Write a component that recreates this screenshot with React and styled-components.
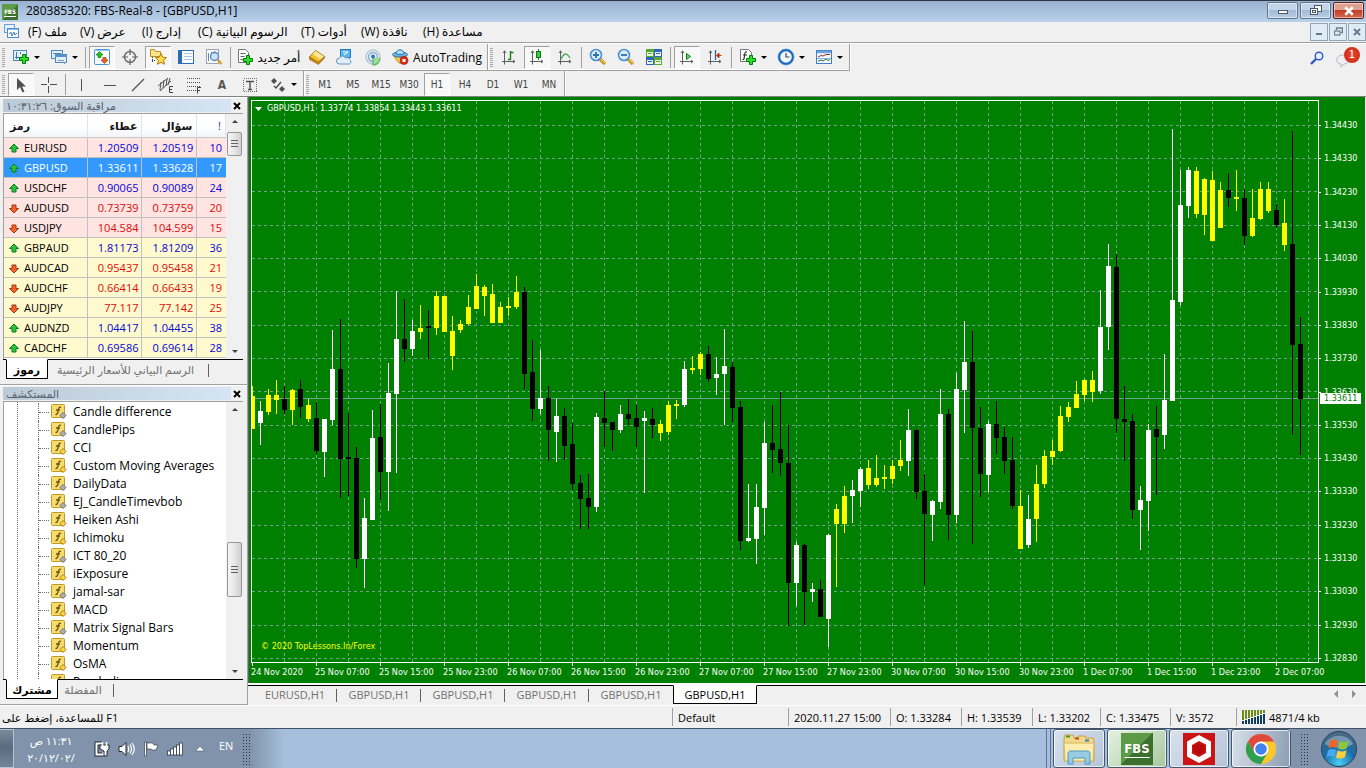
import React, { useState } from 'react'
import styled, { createGlobalStyle, css } from 'styled-components'

const Face = "#f0f0f0";
const Shadow = "#a0a0a0";
const ChartGreen = "#008000";
const GridColor = "#74a08e";
const UiFont = "'Open Sans', 'DejaVu Sans', sans-serif";
const SmallFont = "'DejaVu Sans Condensed', 'DejaVu Sans', sans-serif";

const GlobalStyle = createGlobalStyle`
  * {
    box-sizing: border-box;
  }
  body {
    margin: 0;
    background: ${Face};
    font-family: ${UiFont};
    font-size: 12px;
    color: #000;
  }
  button {
    font-family: inherit;
    color: inherit;
    padding: 0;
    border: 0;
    background: none;
  }
  svg {
    display: block;
    flex: none;
  }
`

const Window = styled.div`
  display: flex;
  flex-direction: column;
  min-height: 100vh;
`

/* ---------- title bar and menu ---------- */
const TitleBar = styled.header`
  display: flex;
  align-items: center;
  height: 22px;
  padding: 0 2px;
  border-top: 1px solid #30343f;
  background: linear-gradient(#97b1d0, #b9d1ea);
`
const AppName = styled.h1`
  flex: 1;
  margin: 0 0 2px 8px;
  font-size: 12px;
  line-height: 18px;
  font-weight: 400;
`
const FbsMark = styled.span`
  display: flex;
  align-items: center;
  justify-content: center;
  width: ${p => p.$big ? "32px" : "16px"};
  height: ${p => p.$big ? "32px" : "16px"};
  background: linear-gradient(135deg, #5c9a46 50%, #3c7030 50%);
  color: #fff;
  font-family: ${SmallFont};
  font-weight: 700;
  font-size: ${p => p.$big ? "13px" : "6px"};
  line-height: 1;
  text-decoration: underline;
  text-underline-offset: ${p => p.$big ? "4px" : "2px"};
`
const Caption = styled.div`
  display: flex;
  gap: 2px;
  margin-bottom: 2px;
`
const CaptionButton = styled.button`
  display: flex;
  align-items: center;
  justify-content: center;
  width: 31px;
  height: 17px;
  border: 1px solid ${p => p.$close ? "#5a2020" : "#5f7690"};
  border-radius: 2px;
  box-shadow: inset 0 0 0 1px rgba(255, 255, 255, 0.5);
  background: ${p => p.$close
    ? "linear-gradient(#e0a090 45%, #c04028 50%, #d06a50)"
    : "linear-gradient(#c3d5e8 45%, #a2bad4 50%, #b8cee6)"};
`
const MenuBar = styled.nav`
  display: flex;
  align-items: center;
  height: 22px;
  padding: 0 0 2px 4px;
  border-bottom: 1px solid #fff;
  box-shadow: inset 0 -1px 0 ${Shadow};
`
const MenuItem = styled.button`
  width: ${p => p.$w}px;
  margin-right: 18px;
  font-size: 12px;
  line-height: 18px;
  white-space: nowrap;
  text-align: left;
`
const MenuItems = styled.div`
  display: flex;
  flex: 1;
  margin-left: 9px;
`
const MdiButton = styled.button`
  display: flex;
  align-items: center;
  justify-content: center;
  width: 18px;
  height: 18px;
  margin-left: 1px;
  border: 1px solid #92a4b8;
  background: #dfebf7;
`

/* ---------- toolbars ---------- */
const ToolRow = styled.div`
  display: flex;
  height: ${p => p.$last ? "25px" : "27px"};
`
const Group = styled.div`
  display: flex;
  align-items: center;
  gap: 2px;
  height: ${p => p.$flat ? "25px" : "27px"};
  padding-top: ${p => p.$flat ? "2px" : "0"};
  padding-right: 2px;
  border-right: 1px solid ${Shadow};
  border-bottom: ${p => p.$flat ? "0" : "1px solid " + Shadow};
  box-shadow: 1px 0 0 #fff, inset 0 -1px 0 ${p => p.$flat ? "transparent" : "#fff"};
`
const Grip = styled.span`
  width: 3px;
  height: 19px;
  margin: 0 1px 0 2px;
  background: repeating-linear-gradient(#a8a8a8 0 1px, transparent 1px 2px);
`
const Sep = styled.span`
  width: 1px;
  height: 21px;
  margin: 0 1px;
  background: ${Shadow};
`
const Tool = styled.button`
  display: flex;
  align-items: center;
  justify-content: center;
  gap: 4px;
  width: ${p => p.$w || 26}px;
  height: 23px;
  white-space: nowrap;
  font-size: 12px;
  ${p => p.$on && css`
    border: 1px solid ${Shadow};
    border-right-color: #fff;
    border-bottom-color: #fff;
    background: #f8f8f8;
  `}
`
const Frame = styled(Tool)`
  font-family: ${SmallFont};
  font-size: 10px;
  color: #444;
`
const Letter = styled(Tool)`
  font-family: ${SmallFont};
  font-size: 12px;
  font-weight: 700;
  color: #555;
`
const Caret = styled.span`
  border: 3px solid transparent;
  border-top-color: #000;
  border-bottom: 0;
`
const RowEnd = styled.div`
  display: flex;
  flex: 1;
  align-items: center;
  justify-content: flex-end;
  gap: 12px;
  padding-right: 6px;
`
const Chat = styled.button`
  position: relative;
  width: 24px;
  height: 22px;
`
const Badge = styled.span`
  position: absolute;
  top: 0;
  right: 0;
  width: 16px;
  height: 16px;
  border-radius: 50%;
  background: radial-gradient(#e84a30, #c82010);
  color: #fff;
  font-family: ${SmallFont};
  font-size: 11px;
  line-height: 16px;
`

/* ---------- body ---------- */
const Body = styled.main`
  display: grid;
  grid-template-columns: 248px minmax(0, 1fr);
  flex: 1;
  border-top: 1px solid #808080;
`
const Side = styled.aside`
  display: flex;
  flex-direction: column;
  border-right: 1px solid ${Shadow};
`
const Panel = styled.section`
  display: flex;
  flex-direction: column;
  flex: ${p => p.$grow ? "1" : "none"};
  padding: 2px 4px 3px 3px;
  border-bottom: 1px solid ${Shadow};
  box-shadow: inset 0 1px 0 #fff;
`
const PanelHead = styled.div`
  display: flex;
  align-items: center;
  height: 13px;
  margin-bottom: 1px;
`
const PanelTitle = styled.h2`
  flex: 1;
  margin: 0;
  padding-left: 3px;
  background: linear-gradient(90deg, #bccad8, #d6e5f3);
  color: #56606c;
  font-size: 11px;
  line-height: 13px;
  font-weight: 400;
`
const Close = styled.button`
  width: 12px;
  display: flex;
  justify-content: center;
`
const Box = styled.div`
  display: flex;
  flex: 1 0 0px;
  min-height: ${p => p.$h}px;
  border: 1px solid ${Shadow};
  border-right: 0;
  border-bottom: 0;
  background: #fff;
  overflow: hidden;
`
const Quotes = styled.table`
  flex: 1;
  align-self: flex-start;
  table-layout: fixed;
  border-collapse: separate;
  border-spacing: 0;
`
const Head = styled.th`
  width: ${p => p.$w};
  height: 24px;
  padding: 0 4px 0 6px;
  border-right: 1px solid #dfe4ea;
  border-bottom: 1px solid #c8c8c8;
  background: linear-gradient(#fff 50%, #f3f5f8);
  font-size: 11px;
  font-weight: ${p => p.$plain ? "400" : "700"};
  color: ${p => p.$plain ? "#40308c" : "#111"};
  text-align: ${p => p.$left ? "left" : "right"};
`
const Row = styled.tr`
  background: ${p => p.$on ? "#3399ff" : p.$pink ? "#ffe4e1" : "#fffacd"};
  color: ${p => p.$on ? "#fff" : p.$down ? "#e00808" : "#0404d8"};
`
const Cell = styled.td`
  height: 20px;
  padding: 0 3px 0 0;
  border-right: 1px solid #c0c0c0;
  border-bottom: 1px solid #c0c0c0;
  font-size: 11px;
  line-height: 19px;
  text-align: right;
  &:last-child {
    padding-right: 4px;
    border-right: 0;
  }
`
const Pair = styled.div`
  display: flex;
  align-items: center;
  gap: 4px;
  padding-left: 4px;
  color: ${p => p.$on ? "#fff" : "#000"};
`
const Scroll = styled.div`
  display: flex;
  flex-direction: column;
  align-items: center;
  justify-content: space-between;
  position: relative;
  width: 17px;
  padding: 6px 0;
  background: #f0f0f0;
`
const Thumb = styled.div`
  position: absolute;
  top: ${p => p.$top};
  width: 15px;
  height: ${p => p.$h}px;
  border: 1px solid #979797;
  border-radius: 2px;
  background:
    repeating-linear-gradient(#606060 0 1px, transparent 1px 3px) center / 7px 8px no-repeat,
    linear-gradient(90deg, #f5f5f5, #e6e6e6 50%, #cfcfcf);
`
const ScrollArrow = styled.button`
  border: 3px solid transparent;
  border-top-width: ${p => p.$up ? "0" : "3px"};
  border-bottom-width: ${p => p.$up ? "3px" : "0"};
  border-${p => p.$up ? "bottom" : "top"}-color: #404040;
`
const Tabs = styled.div`
  display: flex;
  height: 22px;
  padding-left: 3px;
  border-top: 1px solid #000;
`
const PanelTab = styled.button`
  height: 20px;
  min-width: ${p => p.$w}px;
  margin-top: -1px;
  font-size: 11px;
  white-space: nowrap;
  ${p => p.$on ? css`
    border: 1px solid #000;
    border-top-color: #fff;
    background: #fff;
    font-weight: 700;
  ` : css`
    color: #707070;
  `}
`
const TabRule = styled.span`
  width: 1px;
  height: 13px;
  margin: 4px 0 0 5px;
  background: #606060;
`
const Tree = styled.ul`
  flex: 1;
  height: 0;
  margin: 0 0 0 13px;
  padding: 1px 0 0;
  list-style: none;
`
const TreeRail = styled.div`
  display: flex;
  flex: 1;
  height: 0;
  min-height: 100%;
  background: repeating-linear-gradient(#707070 0 1px, transparent 1px 2px) 13px 0 / 1px 100% no-repeat;
`
const Leaf = styled.li`
  display: flex;
  align-items: center;
  height: 18px;
  margin-left: 21px;
  border-left: 1px dotted #707070;
  font-size: 12px;
  line-height: 18px;
  white-space: nowrap;
  &::before {
    content: "";
    width: 10px;
    margin-right: 2px;
    border-top: 1px dotted #707070;
  }
  svg {
    margin-right: 6px;
  }
`

/* ---------- chart ---------- */
const ChartColumn = styled.div`
  display: flex;
  flex-direction: column;
  min-width: 0;
`
const Chart = styled.section`
  display: grid;
  grid-template-columns: minmax(0, 1fr) 46px;
  grid-template-rows: minmax(500px, 1fr) 20px;
  flex: 1;
  padding: 3px 0 0 2px;
  border-left: 1px solid #606060;
  border-right: 1px solid #fff;
  background: ${ChartGreen};
  font-family: ${SmallFont};
  font-size: 9px;
  line-height: 11px;
  color: #fff;
`
const Plot = styled.div`
  position: relative;
  display: flex;
  border: 1px solid #fff;
`
const Symbol = styled.div`
  position: absolute;
  top: 2px;
  left: 3px;
  display: flex;
  align-items: center;
  gap: 5px;
  color: #fff;
`
const Watermark = styled.div`
  position: absolute;
  left: 9px;
  bottom: 10px;
  color: #ffff00;
`
const PriceAxis = styled.div`
  position: relative;
  display: flex;
  flex-direction: column;
  justify-content: space-between;
  padding-top: 21px;
`
const Price = styled.span`
  display: flex;
  align-items: center;
  height: 9px;
  &::before {
    content: "";
    width: 2px;
    height: 1px;
    margin-right: 3px;
    background: #fff;
  }
`
const Bid = styled.span`
  position: absolute;
  top: 293px;
  left: 1px;
  right: 4px;
  padding-left: 4px;
  background: #fff;
  color: ${ChartGreen};
`
const TimeAxis = styled.div`
  display: flex;
  grid-column: 1 / -1;
`
const Time = styled.span`
  flex: 0 0 64px;
  padding-top: 4px;
  white-space: nowrap;
  background: linear-gradient(#fff, #fff) 1px 0 / 1px 3px no-repeat;
`
const ChartTabs = styled.div`
  display: flex;
  height: 20px;
  margin-top: 2px;
  padding-left: 5px;
  border-top: 1px solid #000;
  box-shadow: 0 -2px 0 #fff;
`
const ChartTab = styled.button`
  width: 84px;
  height: 19px;
  margin-top: -1px;
  font-size: 11px;
  color: #707070;
  ${p => p.$on ? css`
    border: 1px solid #000;
    border-top-color: #fff;
    background: #fff;
    color: #000;
  ` : css`
    background: linear-gradient(#606060, #606060) right 4px / 1px 13px no-repeat;
  `}
  ${p => p.$beforeOn && css`background: none;`}
`
const TabArrows = styled.div`
  display: flex;
  flex: 1;
  align-items: center;
  justify-content: flex-end;
  gap: 14px;
  padding: 0 10px 4px 0;
`
const SideArrow = styled.button`
  border: 4px solid transparent;
  border-${p => p.$dir}-color: #909090;
  border-${p => p.$dir === "left" ? "right" : "left"}-width: 0;
  border-${p => p.$dir}-width: 4px;
`

/* ---------- status bar ---------- */
const Status = styled.footer`
  display: flex;
  align-items: center;
  height: 23px;
  border-top: 1px solid #fff;
`
const StatusCell = styled.div`
  display: flex;
  align-items: center;
  gap: 3px;
  flex: ${p => p.$w ? "none" : "1"};
  width: ${p => p.$w ? p.$w + "px" : "auto"};
  height: 18px;
  padding-left: ${p => p.$w ? "5px" : "2px"};
  border-left: ${p => p.$w ? "1px solid " + Shadow : "0"};
  font-size: 11px;
  white-space: nowrap;
`

/* ---------- task bar ---------- */
const TaskBar = styled.div`
  display: flex;
  align-items: stretch;
  height: 40px;
  border-top: 1px solid #3d5068;
  background: linear-gradient(90deg, #8093aa 0, #8093aa 250px, #a6bfdc 285px);
`
const ShowDesktop = styled.button`
  width: 14px;
  border: 1px solid #b4c2d2;
  border-left: 0;
  background: linear-gradient(#7c8a9c, #5c6a7e 45%, #74849a);
`
const Clock = styled.time`
  width: 74px;
  padding-top: 3px;
  color: #fff;
  font-size: 11px;
  line-height: 17px;
  text-align: center;
`
const Tray = styled.div`
  display: flex;
  align-items: center;
  gap: 8px;
  padding-left: 6px;
`
const Lang = styled.span`
  margin: 0 9px 6px 3px;
  color: #fff;
  font-size: 11px;
`
const TaskGrip = styled.span`
  align-self: center;
  width: 9px;
  height: 32px;
  background: radial-gradient(circle, #26303c 0 1px, transparent 1px) 0 0 / 3px 3px;
`
const TaskButtons = styled.div`
  display: flex;
  flex: 1;
  justify-content: flex-end;
  gap: 2px;
`
const TaskButton = styled.button`
  display: flex;
  align-items: center;
  justify-content: center;
  width: ${p => p.$w || 60}px;
  border: 1px solid #45566c;
  border-radius: 3px;
  box-shadow: inset 0 0 0 1px rgba(255, 255, 255, 0.7);
  background: ${p => p.$on
    ? "linear-gradient(135deg, #e4f2e0, #a8c8a0)"
    : p.$dim ? "linear-gradient(100deg, #d8e0ea, #8c9cb2)" : "linear-gradient(135deg, #d8e2ee, #b4c4d8)"};
`
const Stack = styled.span`
  width: 5px;
  border: 1px solid #5e7490;
  border-width: 0 1px;
`
const TaskEnd = styled.div`
  display: flex;
  align-items: center;
  gap: 11px;
  padding: 0 8px 0 9px;
  background: #8093aa;
`

/* ---------- icons ---------- */
const Icon = ({ size = 18, children }) => (
  <svg width={size} height={size} viewBox="0 0 18 18" fill="none" aria-hidden="true">{children}</svg>
)
const Plus = ({ x, y }) => (
  <path d={`M${x} ${y}h3v3h3v3h-3v3h-3v-3h-3v-3h3z`} fill="#2ee02e" stroke="#067a06" />
)
const NewChart = () => (
  <Icon>
    <rect x="1.500" y="2.500" width="13" height="10" fill="#e6f0fb" stroke="#5088bc" />
    <path d="M4.500 4v7M3 9.500h9M8.500 4v2" stroke="#3b78ae" />
    <Plus x={10.500} y={6.500} />
  </Icon>
)
const Profiles = () => (
  <Icon>
    <rect x="1.500" y="2.500" width="11" height="8" fill="#e2eefb" stroke="#5088bc" />
    <path d="M3 5.500h8" stroke="#5088bc" />
    <rect x="5.500" y="6.500" width="11" height="8" fill="#e2eefb" stroke="#5088bc" />
    <path d="M5 8h12" stroke="#5a94cc" strokeWidth="2" />
    <path d="M8 12.500h6M14.500 16v-2" stroke="#7d9cc0" />
  </Icon>
)
const MarketWatch = () => (
  <Icon>
    <rect x="1.500" y="1.500" width="15" height="15" rx="1" fill="#fbfdff" stroke="#4a94d8" />
    <path d="M2 2.500h14" stroke="#9ccaf0" />
    <path d="M6.500 3.500l3.500 3.500H8v2.500H5V7H3z" fill="#24c024" stroke="#0b7a0b" strokeWidth=".7" />
    <path d="M11.500 15.500L15 12h-2V9.500h-3V12H8z" fill="#f0602c" stroke="#a03010" strokeWidth=".7" />
  </Icon>
)
const Target = () => (
  <Icon>
    <circle cx="9" cy="9" r="5.500" stroke="#707070" strokeWidth="1.500" />
    <path d="M9 1v6M9 11v6M1 9h6M11 9h6" stroke="#606060" strokeWidth="1.200" />
  </Icon>
)
const Navigator = () => (
  <Icon>
    <path d="M1.500 1.500h4l1 2h5v5h-10z" fill="#fbe48a" stroke="#b89024" />
    <path d="M3.500 9v6M3 12.500h4" stroke="#444" strokeDasharray="1 1" />
    <path d="M12 5.500l1.700 3.700 3.800.4-2.900 2.700.9 4-3.500-2-3.500 2 .9-4L6.500 9.600l3.800-.4z" fill="#ffdc48" stroke="#b07c10" />
  </Icon>
)
const DataWindow = () => (
  <Icon>
    <rect x="1.500" y="2.500" width="15" height="13" fill="#fff" stroke="#2a6cb8" />
    <path d="M3.500 3v12" stroke="#2a6cb8" strokeWidth="3" />
    <path d="M7 5.500h8M7 8.500h8M7 11.500h8" stroke="#a8c4ec" />
  </Icon>
)
const Tester = () => (
  <Icon>
    <rect x="1.500" y="1.500" width="12" height="14" fill="#f6f8fa" stroke="#9aa4b0" />
    <path d="M3.500 13V5M6.500 9V4M10 6V3" stroke="#7088a0" />
    <circle cx="9.500" cy="8.500" r="4" fill="#c4e0f8" fillOpacity=".85" stroke="#5a8cc0" strokeWidth="1.400" />
    <path d="M12.500 11.500l4 4.500" stroke="#d8a030" strokeWidth="2.400" />
  </Icon>
)
const NewOrder = () => (
  <Icon>
    <path d="M2.500 1.500h7l3 3v10h-10z" fill="#fff" stroke="#777" />
    <path d="M4.500 5.500h5M4.500 8.500h4M4.500 11.500h3" stroke="#666" />
    <Plus x={10.500} y={7.500} />
  </Icon>
)
const Gold = () => (
  <Icon>
    <path d="M1.500 9l6-6.500 9 6-6 6.500z" fill="#f4c430" stroke="#a87810" />
    <path d="M7.500 3l8.500 5.500-3 3L4.500 6z" fill="#ffe89a" />
    <path d="M1.500 9v2.500l9 5 6-6.500V8.500L10.500 14z" fill="#c88c18" stroke="#906008" strokeWidth=".6" />
  </Icon>
)
const Community = () => (
  <Icon>
    <rect x="4.500" y="1.500" width="10" height="8" fill="#58b8f0" stroke="#2878b8" />
    <path d="M7 4h5M8 7l4-3" stroke="#fff" />
    <path d="M3.500 16a3 3 0 010-6c1-2.500 5-2.500 6 0 2-1 4 0 4 1.500a2.500 2.500 0 010 4.500z" fill="#dfeefa" stroke="#6b94bc" />
  </Icon>
)
const Signal = () => (
  <Icon>
    <circle cx="9" cy="9" r="7" stroke="#b8c8d4" strokeWidth="1.500" />
    <circle cx="9" cy="9" r="4.500" stroke="#88aed0" strokeWidth="1.500" />
    <path d="M9 9v8c4 0 7-3 7-7" fill="#a0dca0" stroke="#58b858" strokeWidth="1.200" />
    <circle cx="9" cy="8.500" r="2" fill="#2878c8" />
  </Icon>
)
const AutoIcon = () => (
  <Icon>
    <path d="M2 7c4 3 9 3 14 0l-4 8H8z" fill="#f8d850" stroke="#b88c18" />
    <ellipse cx="9" cy="6.500" rx="7.500" ry="2.500" fill="#6cb4e4" stroke="#3878b0" />
    <path d="M5 5.500c0-5 8-5 8 0-2 1.500-6 1.500-8 0z" fill="#a8d8f4" stroke="#3878b0" />
    <circle cx="13" cy="12.500" r="4" fill="#e02818" stroke="#a01008" strokeWidth=".6" />
    <rect x="11.500" y="11" width="3" height="3" fill="#fff" />
  </Icon>
)
const Axes = () => <path d="M4.500 2.500v14M2 13.500h13M3 5l1.500-2L6 5M13 12l2 1.500-2 1.500" stroke="#606060" />
const BarChart = () => <Icon><Axes /><path d="M10.500 3v9M8 11.500h3M10.500 4.500h3" stroke="#188018" strokeWidth="1.400" /></Icon>
const CandleChart = () => <Icon><Axes /><path d="M10.500 1v11" stroke="#188018" /><rect x="8.500" y="3.500" width="4" height="6" fill="#30d048" stroke="#107818" /></Icon>
const LineChart = () => <Icon><Axes /><path d="M5 11c3-6 5-7 9-1" stroke="#40a850" strokeWidth="1.300" /></Icon>
const ScrollChart = () => <Icon><Axes /><path d="M8.500 5.500l4 3-4 3z" fill="#58d868" stroke="#108018" /></Icon>
const ShiftChart = () => <Icon><Axes /><path d="M9.500 2v10" stroke="#2868a8" strokeWidth="1.300" /><path d="M15.500 7.500h-4M13 5l-2.500 2.500L13 10z" fill="#d04820" stroke="#b83810" /></Icon>
const Zoom = ({ plus }) => (
  <Icon>
    <path d="M11 11l5 5" stroke="#c89828" strokeWidth="3.500" />
    <path d="M11.500 10.500l5 5" stroke="#ffe070" strokeWidth="1" />
    <circle cx="7" cy="7" r="5.500" fill="#d8ecfc" stroke="#4890cc" strokeWidth="1.600" />
    <path d={plus ? "M4 7h6M7 4v6" : "M4 7h6"} stroke="#2c70b0" strokeWidth="1.800" />
  </Icon>
)
const Tile = () => (
  <Icon>
    {[[1, 1, "#58a830"], [9, 1, "#2c64c0"], [1, 9, "#2c64c0"], [9, 9, "#58a830"]].map(([x, y, c]) => (
      <g key={x + "-" + y}>
        <rect x={x} y={y} width="8" height="8" fill={c} />
        <rect x={x + 1} y={y + 3} width="6" height="4" fill="#eaf4e8" />
        <path d={`M${x + 2} ${y + 4.500}h4`} stroke={c} />
      </g>
    ))}
  </Icon>
)
const Indicators = () => (
  <Icon>
    <path d="M1.500 1.500h8l3 3v9h-11z" fill="#fff" stroke="#777" />
    <path d="M8 4c-2-1-2 1-2.500 4S5 12 3.500 11.500M4 7h4" stroke="#333" strokeWidth="1.200" />
    <Plus x={10.500} y={7.500} />
  </Icon>
)
const ClockIcon = () => (
  <Icon>
    <circle cx="9" cy="9" r="7" fill="#eef6fc" stroke="#1c68b8" strokeWidth="2.400" />
    <circle cx="9" cy="9" r="8" stroke="#68acec" strokeWidth=".6" />
    <path d="M9 5v4h3.500" stroke="#404850" strokeWidth="1.200" />
  </Icon>
)
const Templates = () => (
  <Icon>
    <rect x="1.500" y="2.500" width="15" height="13" fill="#f6fafe" stroke="#4080c0" />
    <path d="M2 4h14" stroke="#68a4e0" strokeWidth="2.500" />
    <path d="M3 9l3-1.500 2 .5 3-1.500h4" stroke="#903020" />
    <path d="M3 13l3-1 2 1 3-2 2 1.500 2-1" stroke="#208040" />
    <path d="M2 10.500h14" stroke="#8cb0d8" />
  </Icon>
)
const Cursor = () => <Icon><path d="M5 2v12l3-3 2.500 5.500 2-1L10 10.500h4z" fill="#505050" /></Icon>
const Cross = () => <Icon><path d="M8.500 1v6M8.500 10v7M1 8.500h6M10 8.500h7" stroke="#505050" /></Icon>
const VLine = () => <Icon><path d="M8.500 3v12" stroke="#505050" /></Icon>
const HLine = () => <Icon><path d="M3 9.500h12" stroke="#505050" /></Icon>
const Trend = () => <Icon><path d="M3 15L15 3" stroke="#505050" strokeWidth="1.200" /></Icon>
const Channel = () => (
  <Icon>
    <path d="M1 10L11 2M3 15L14 5M4 6l-1 8M7 4l-1 8M10 3L9 10M13 2l-2 7" stroke="#505050" />
    <path d="M16 10.500h-3.500v6H16M12.500 13.500H15" stroke="#404040" />
  </Icon>
)
const Fibo = () => (
  <Icon>
    <path d="M2 2.500h14M2 6.500h14M2 10.500h14M2 14.500h9" stroke="#505050" strokeDasharray="1 1" />
    <path d="M16 11.500h-3.500v6M12.500 14.500H15" stroke="#404040" />
  </Icon>
)
const Objects = () => (
  <Icon>
    <path d="M5 2l3 3-3 3-3-3z" fill="#505050" />
    <path d="M5 10l2 2 5-6" stroke="#505050" strokeWidth="1.500" />
    <path d="M13 10l3 3-3 3-3-3z" fill="#505050" />
  </Icon>
)
const LabelT = () => (
  <Icon>
    <rect x="2.500" y="2.500" width="13" height="13" stroke="#707070" strokeDasharray="1 1" shapeRendering="crispEdges" />
    <path d="M5 5.500h8M9 5v8M7 13.500h4" stroke="#505050" strokeWidth="1.400" />
  </Icon>
)
const ChartsIcon = () => (
  <svg width="15" height="15" viewBox="0 0 15 15" fill="none" aria-hidden="true">
    <rect x=".5" y=".5" width="10" height="8" fill="#e6f1fc" stroke="#6aa0d8" />
    <rect x="3.500" y="4.500" width="11" height="9" fill="#fff" stroke="#4c8cd0" />
    <path d="M4 5.500h10" stroke="#8abcf0" />
    <path d="M5 10l2-2 1 4 2-4 1 3 2-2" stroke="#4080c8" />
  </svg>
)
const ArrowMark = ({ down }) => (
  <svg width="12" height="12" viewBox="0 0 12 12" aria-hidden="true">
    <path d={down ? "M6 11L1.500 6.500H4V3h4v3.500h2.500z" : "M6 2L1.500 6.500H4V10h4V6.500h2.500z"}
      fill={down ? "#f0632c" : "#2cc040"} stroke={down ? "#a83410" : "#0c7c1c"} />
  </svg>
)
const FuncIcon = ({ gray }) => (
  <svg width="16" height="16" viewBox="0 0 16 16" aria-hidden="true">
    <rect x=".5" y=".5" width="13" height="13" rx="1" fill="#f6dc6c" stroke="#c09a28" />
    <path d="M10 3.500c-2-.8-2.400.7-2.700 2.500S6.800 10.800 4.500 10.500M5 6h4" fill="none" stroke="#6c5410" strokeWidth="1.300" />
    <path d="M12 8.500l3 3-3 3-3-3z" fill={gray ? "#b0b0b0" : "#ffd848"} stroke={gray ? "#707070" : "#a87810"} />
  </svg>
)
const SmallX = ({ color = "#000", size = 8, w = 2 }) => (
  <svg width={size} height={size} viewBox="0 0 8 8"><path d="M1 1l6 6M7 1L1 7" stroke={color} strokeWidth={w} /></svg>
)
const MinMark = () => (
  <svg width="12" height="8" viewBox="0 0 12 8"><rect x="1.500" y="3.500" width="9" height="3" fill="#fff" stroke="#4a5a6c" /></svg>
)
const MdiMin = () => (
  <svg width="8" height="8" viewBox="0 0 8 8"><rect x="1" y="5" width="6" height="2" fill="#687c90" /></svg>
)
const RestoreMark = ({ color = "#fff" }) => (
  <svg width="12" height="11" viewBox="0 0 12 11" fill="none" stroke="#4a5a6c">
    <rect x="4.500" y=".5" width="7" height="6" fill={color} />
    <rect x=".5" y="3.500" width="7" height="6" fill={color} /><rect x="2.500" y="5.500" width="3" height="2" />
  </svg>
)
const MdiRestore = () => (
  <svg width="9" height="9" viewBox="0 0 9 9" fill="none" stroke="#687c90">
    <path d="M2.500 3V1h6v4.500H7" strokeWidth="1.400" /><rect x=".5" y="4" width="5.500" height="4" strokeWidth="1.200" />
  </svg>
)
const Bars = () => (
  <svg width="24" height="14" viewBox="0 0 24 14" aria-hidden="true">
    {[0, 1, 2, 3, 4, 5, 6, 7].map(i => (
      <g key={i}>
        <rect x={i * 3} y="0" width="2" height={10 - i} fill="#6c8a18" />
        <rect x={i * 3} y={11 - i} width="2" height={3 + i} fill="#103c60" />
      </g>
    ))}
  </svg>
)

/* ---------- data ---------- */
const menus = [
  ["ملف (F)", 34], ["عرض (V)", 44], ["إدارج (I)", 38], ["الرسوم البيانية (C)", 85],
  ["أدوات (T)", 42], ["نافذة (W)", 44], ["مساعدة (H)", 56],
]
const quotes = [
  ["EURUSD", "1.20509", "1.20519", 10, "up"],
  ["GBPUSD", "1.33611", "1.33628", 17, "up"],
  ["USDCHF", "0.90065", "0.90089", 24, "up"],
  ["AUDUSD", "0.73739", "0.73759", 20, "down"],
  ["USDJPY", "104.584", "104.599", 15, "down"],
  ["GBPAUD", "1.81173", "1.81209", 36, "up"],
  ["AUDCAD", "0.95437", "0.95458", 21, "down"],
  ["AUDCHF", "0.66414", "0.66433", 19, "down"],
  ["AUDJPY", "77.117", "77.142", 25, "down"],
  ["AUDNZD", "1.04417", "1.04455", 38, "up"],
  ["CADCHF", "0.69586", "0.69614", 28, "up"],
]
const indicators = [
  ["Candle difference", 1], ["CandlePips", 1], ["CCI", 0], ["Custom Moving Averages", 0],
  ["DailyData", 1], ["EJ_CandleTimevbob", 1], ["Heiken Ashi", 0], ["Ichimoku", 0],
  ["ICT 80_20", 1], ["iExposure", 0], ["jamal-sar", 1], ["MACD", 0],
  ["Matrix Signal Bars", 1], ["Momentum", 0], ["OsMA", 0], ["Parabolic", 0],
]
const frames = ["M1", "M5", "M15", "M30", "H1", "H4", "D1", "W1", "MN"]
const times = [
  "24 Nov 2020", "25 Nov 07:00", "25 Nov 15:00", "25 Nov 23:00", "26 Nov 07:00", "26 Nov 15:00",
  "26 Nov 23:00", "27 Nov 07:00", "27 Nov 15:00", "27 Nov 23:00", "30 Nov 07:00", "30 Nov 15:00",
  "30 Nov 23:00", "1 Dec 07:00", "1 Dec 15:00", "1 Dec 23:00", "2 Dec 07:00",
]
const prices = Array.from({ length: 17 }, (_, i) => (1.3443 - i * 0.001).toFixed(5))
const gridRows = [24, 57, 90, 124, 157, 190, 224, 257, 290, 324, 357, 390, 424, 457, 490, 524, 557]
const status = [
  ["Default", 116], ["2020.11.27 15:00", 102], ["O: 1.33284", 71], ["H: 1.33539", 71],
  ["L: 1.33202", 68], ["C: 1.33475", 70], ["V: 3572", 66],
]
const chartTabs = ["EURUSD,H1", "GBPUSD,H1", "GBPUSD,H1", "GBPUSD,H1", "GBPUSD,H1", "GBPUSD,H1"]

// colour, wick top, body top, body bottom, wick bottom
const candles = `
y 386 396 429 429|w 401 411 423 445|y 389 395 412 415|y 380 395 400 414|k 386 399 410 414|y 389 390 410 425
k 380 389 407 418|y 399 405 419 422|k 402 418 451 454|w 419 419 452 477|w 330 369 420 425|k 319 369 459 498
k 413 457 459 496|k 447 458 559 568|w 498 518 559 588|w 410 438 520 520|k 404 437 472 500|w 363 393 472 511
w 291 339 394 473|k 299 339 349 362|w 320 331 349 356|y 305 328 332 339|k 310 326 328 359|y 291 296 328 335
y 296 296 332 332|y 316 331 356 370|y 320 324 330 333|y 295 307 324 325|y 274 286 309 309|y 285 287 296 316
y 284 294 323 323|y 302 307 323 323|y 297 306 308 316|y 276 292 307 309|k 287 292 374 389|k 340 372 409 421
w 350 398 409 414|k 386 398 430 461|w 399 416 432 462|k 408 416 446 460|k 423 444 484 490|k 475 483 499 529
k 474 498 507 529|w 413 417 507 512|k 391 418 423 447|k 422 422 430 451|w 405 414 430 433|k 399 414 419 425
k 405 418 427 447|w 411 418 421 493|k 408 419 425 438|y 420 424 433 441|y 401 405 432 435|y 400 404 406 419
w 361 369 405 407|y 356 368 370 374|y 352 354 369 375|k 346 354 379 382|w 357 374 378 395|w 329 366 374 425
k 362 367 408 422|k 401 407 541 550|w 484 538 541 542|w 484 507 539 564|w 422 443 508 535|k 405 443 450 473
k 392 449 463 476|k 425 463 583 626|w 542 545 583 606|k 544 545 592 625|w 583 589 592 602|k 580 589 617 617
w 534 535 619 647|y 504 509 524 587|y 486 496 524 533|w 480 490 496 523|w 467 469 491 507|y 460 468 485 489
y 455 478 485 487|y 465 477 479 489|y 460 466 479 484|y 440 460 466 471|w 409 430 461 476|k 429 430 492 499
k 474 491 514 585|w 500 501 515 541|w 389 414 502 509|k 409 414 515 540|w 373 389 515 523|w 321 362 390 433
k 331 362 428 544|k 407 428 474 497|w 421 424 475 492|k 401 424 438 454|k 427 437 461 474|k 437 460 506 509
y 490 506 549 549|w 495 519 545 548|y 465 484 519 542|y 450 456 484 488|y 440 451 457 465|y 406 416 451 452
y 402 407 417 422|y 381 394 408 408|y 379 380 395 401|y 371 380 392 402|w 290 327 391 394|w 244 266 327 350
k 254 267 419 433|k 386 419 422 461|k 414 421 510 519|w 486 500 510 550|w 424 430 501 531|k 406 429 437 495
w 354 400 435 449|w 129 300 401 401|w 170 205 302 305|w 167 170 206 218|y 167 171 214 218|y 178 179 215 235
y 171 180 241 241|y 182 190 228 228|k 173 190 198 207|y 170 197 199 211|k 190 198 236 245|y 189 218 236 237
y 182 189 219 220|y 182 189 211 213|k 204 210 225 228|y 199 223 245 251|k 131 244 345 435|k 317 344 399 455
`.trim().split(/[|\n]/).map(line => {
  const [color, ...levels] = line.split(" ")
  return [color, ...levels.map(n => n - 101)]
})
const candleFill = { y: "#ffff00", w: "#ffffff", k: "#000000" }

const Candles = () => (
  <svg width="100%" height="100%" shapeRendering="crispEdges" role="img" aria-label="GBPUSD,H1">
    {gridRows.map(y => (
      <line key={y} x1="0" x2="100%" y1={y + 0.5} y2={y + 0.5} stroke={GridColor} strokeDasharray="3 3" />
    ))}
    {Array.from({ length: 33 }, (_, i) => 32 + i * 32).map(x => (
      <line key={x} x1={x + 0.5} x2={x + 0.5} y1="0" y2="100%" stroke={GridColor} strokeDasharray="3 3" />
    ))}
    <line x1="0" x2="100%" y1="297.5" y2="297.5" stroke={GridColor} />
    {candles.map(([color, high, top, bottom, low], i) => (
      <g key={i} fill={candleFill[color]}>
        <rect x={i * 8} y={high} width="1" height={low - high} />
        <rect x={i * 8 - 2} y={top} width="5" height={bottom - top} />
      </g>
    ))}
  </svg>
)

const MarketPanel = () => {
  const [picked, setPicked] = useState("GBPUSD")
  return (
    <Panel>
      <PanelHead>
        <PanelTitle><bdi dir="rtl">مراقبة السوق: ١٠:٣١:٢٦</bdi></PanelTitle>
        <Close aria-label="إغلاق"><SmallX /></Close>
      </PanelHead>
      <Box $h={246}>
        <Quotes>
          <thead>
            <tr>
              <Head $left $w="84px">رمز</Head>
              <Head $w="55px">عطاء</Head>
              <Head $w="55px">سؤال</Head>
              <Head $plain $w="29px">!</Head>
            </tr>
          </thead>
          <tbody>
            {quotes.map(([name, bid, ask, spread, dir], i) => (
              <Row key={name} $on={name === picked} $pink={i < 5} $down={dir === "down"} onClick={() => setPicked(name)}>
                <Cell><Pair $on={name === picked}><ArrowMark down={dir === "down"} />{name}</Pair></Cell>
                <Cell>{bid}</Cell>
                <Cell>{ask}</Cell>
                <Cell>{spread}</Cell>
              </Row>
            ))}
          </tbody>
        </Quotes>
        <Scroll>
          <ScrollArrow $up aria-label="أعلى" />
          <Thumb $top="18px" $h={24} />
          <ScrollArrow aria-label="أسفل" />
        </Scroll>
      </Box>
      <Tabs>
        <PanelTab $on $w={42}>رموز</PanelTab>
        <PanelTab $w={155}>الرسم البياني للأسعار الرئيسية</PanelTab>
        <TabRule />
      </Tabs>
    </Panel>
  )
}

const NavigatorPanel = () => (
  <Panel $grow>
    <PanelHead>
      <PanelTitle>المستكشف</PanelTitle>
      <Close aria-label="إغلاق"><SmallX /></Close>
    </PanelHead>
    <Box $h={200}>
      <TreeRail>
        <Tree>
          {indicators.map(([name, gray]) => (
            <Leaf key={name}><FuncIcon gray={gray} />{name}</Leaf>
          ))}
        </Tree>
      </TreeRail>
      <Scroll>
        <ScrollArrow $up aria-label="أعلى" />
        <Thumb $top="140px" $h={55} />
        <ScrollArrow aria-label="أسفل" />
      </Scroll>
    </Box>
    <Tabs>
      <PanelTab $on $w={52}>مشترك</PanelTab>
      <PanelTab $w={50}>المفضلة</PanelTab>
      <TabRule />
    </Tabs>
  </Panel>
)

const App = () => {
  const [frame, setFrame] = useState("H1")
  const [tab, setTab] = useState(5)
  return (
    <>
      <GlobalStyle />
      <Window>
        <TitleBar>
          <FbsMark>FBS</FbsMark>
          <AppName>280385320: FBS-Real-8 - [GBPUSD,H1]</AppName>
          <Caption>
            <CaptionButton aria-label="تصغير"><MinMark /></CaptionButton>
            <CaptionButton aria-label="استعادة"><RestoreMark /></CaptionButton>
            <CaptionButton $close aria-label="إغلاق"><SmallX color="#fff" size={10} /></CaptionButton>
          </Caption>
        </TitleBar>
        <MenuBar>
          <ChartsIcon />
          <MenuItems>
            {menus.map(([label, w]) => <MenuItem key={label} $w={w}><bdi dir="rtl">{label}</bdi></MenuItem>)}
          </MenuItems>
          <MdiButton aria-label="تصغير"><MdiMin /></MdiButton>
          <MdiButton aria-label="استعادة"><MdiRestore /></MdiButton>
          <MdiButton aria-label="إغلاق"><SmallX color="#687c90" /></MdiButton>
        </MenuBar>

        <ToolRow>
          <Group>
            <Grip />
            <Tool $w={36} aria-label="new chart"><NewChart /><Caret /></Tool>
            <Tool $w={36} aria-label="profiles"><Profiles /><Caret /></Tool>
            <Sep />
            <Tool $on aria-label="market watch"><MarketWatch /></Tool>
            <Tool aria-label="data window"><Target /></Tool>
            <Tool $on aria-label="navigator"><Navigator /></Tool>
            <Tool aria-label="terminal"><DataWindow /></Tool>
            <Tool aria-label="tester"><Tester /></Tool>
            <Sep />
            <Tool $w={68}><NewOrder />أمر جديد</Tool>
            <Tool aria-label="editor"><Gold /></Tool>
            <Tool aria-label="community"><Community /></Tool>
            <Tool aria-label="signals"><Signal /></Tool>
            <Tool $w={97}><AutoIcon />AutoTrading</Tool>
          </Group>
          <Group>
            <Grip />
            <Tool aria-label="bar chart"><BarChart /></Tool>
            <Tool $on aria-label="candlesticks"><CandleChart /></Tool>
            <Tool aria-label="line chart"><LineChart /></Tool>
            <Sep />
            <Tool aria-label="zoom in"><Zoom plus /></Tool>
            <Tool aria-label="zoom out"><Zoom /></Tool>
            <Tool aria-label="tile windows"><Tile /></Tool>
            <Sep />
            <Tool $on aria-label="auto scroll"><ScrollChart /></Tool>
            <Tool aria-label="chart shift"><ShiftChart /></Tool>
            <Sep />
            <Tool $w={36} aria-label="indicators"><Indicators /><Caret /></Tool>
            <Tool $w={36} aria-label="periods"><ClockIcon /><Caret /></Tool>
            <Tool $w={36} aria-label="templates"><Templates /><Caret /></Tool>
          </Group>
          <RowEnd>
            <button aria-label="search">
              <svg width="14" height="14" viewBox="0 0 14 14" fill="none">
                <circle cx="9" cy="5" r="3.800" fill="#e8f0ff" stroke="#2c58c8" strokeWidth="1.400" />
                <path d="M6 8l-5 5" stroke="#2c58c8" strokeWidth="2.400" />
              </svg>
            </button>
            <Chat>
              <svg width="16" height="18" viewBox="0 0 16 18">
                <path d="M7 6c-8 0-8 9-2 9v3l3-3c6 0 7-9-1-9z" fill="#f0f0f4" stroke="#b4b4bc" />
              </svg>
              <Badge>1</Badge>
            </Chat>
          </RowEnd>
        </ToolRow>
        <ToolRow $last>
          <Group $flat>
            <Grip />
            <Tool $on aria-label="cursor"><Cursor /></Tool>
            <Tool aria-label="crosshair"><Cross /></Tool>
            <Sep />
            <Tool aria-label="vertical line"><VLine /></Tool>
            <Tool aria-label="horizontal line"><HLine /></Tool>
            <Tool aria-label="trendline"><Trend /></Tool>
            <Tool aria-label="channel"><Channel /></Tool>
            <Tool aria-label="fibonacci"><Fibo /></Tool>
            <Letter>A</Letter>
            <Tool aria-label="text label"><LabelT /></Tool>
            <Tool $w={36} aria-label="arrows"><Objects /><Caret /></Tool>
          </Group>
          <Group $flat>
            <Grip />
            {frames.map(f => <Frame key={f} $on={f === frame} onClick={() => setFrame(f)}>{f}</Frame>)}
          </Group>
        </ToolRow>

        <Body>
          <Side>
            <MarketPanel />
            <NavigatorPanel />
          </Side>
          <ChartColumn>
            <Chart>
              <Plot>
                <Candles />
                <Symbol>
                  <svg width="7" height="4" viewBox="0 0 7 4"><path d="M0 0h7L3.500 4z" fill="#fff" /></svg>
                  <span>GBPUSD,H1&nbsp; 1.33774 1.33854 1.33443 1.33611</span>
                </Symbol>
                <Watermark>© 2020 TopLessons.In/Forex</Watermark>
              </Plot>
              <PriceAxis>
                {prices.map(p => <Price key={p}>{p}</Price>)}
                <Bid>1.33611</Bid>
              </PriceAxis>
              <TimeAxis>
                {times.map(t => <Time key={t}>{t}</Time>)}
              </TimeAxis>
            </Chart>
            <ChartTabs>
              {chartTabs.map((name, i) => (
                <ChartTab key={i} $on={i === tab} $beforeOn={i + 1 === tab} onClick={() => setTab(i)}>{name}</ChartTab>
              ))}
              <TabArrows>
                <SideArrow $dir="right" aria-label="previous" />
                <SideArrow $dir="left" aria-label="next" />
              </TabArrows>
            </ChartTabs>
          </ChartColumn>
        </Body>

        <Status>
          <StatusCell>للمساعدة، إضغط على F1</StatusCell>
          {status.map(([text, w]) => <StatusCell key={text} $w={w}>{text}</StatusCell>)}
          <StatusCell $w={130}><Bars />4871/4 kb</StatusCell>
        </Status>

        <TaskBar>
          <ShowDesktop aria-label="desktop" />
          <Clock>
            <div dir="rtl">١١:٣١ ص</div>
            <div>٢٠/١٢/٠٢/</div>
          </Clock>
          <Tray>
            <svg width="16" height="18" viewBox="0 0 16 18" fill="none">
              <path d="M8 3.500H2.500v11h7" stroke="#202830" strokeWidth="4" />
              <path d="M8 3.500H2.500v11h7V12" stroke="#fff" strokeWidth="2" />
              <path d="M6 5h9v4l-2 2v5h-3v-5L6 9z" fill="#fff" stroke="#202830" />
              <path d="M8.500 2v4M12.500 2v4" stroke="#fff" strokeWidth="1.500" />
            </svg>
            <svg width="17" height="16" viewBox="0 0 17 16" fill="none">
              <path d="M1 5.500h3l4-4v13l-4-4H1z" fill="#fff" stroke="#202830" />
              <path d="M10 5c1 2 1 4 0 6M12 3.500c2 3 2 6 0 9M14 2c3 4 3 8 0 12" stroke="#fff" strokeWidth="1.200" />
            </svg>
            <svg width="16" height="16" viewBox="0 0 16 16">
              <path d="M1.500 1h2v14h-2z" fill="#fff" stroke="#202830" strokeWidth=".6" />
              <path d="M4 2h6l1 2h4l-2 5H9L8 8H4z" fill="#fff" stroke="#202830" strokeWidth=".6" />
            </svg>
            <svg width="17" height="14" viewBox="0 0 17 14">
              {[0, 1, 2, 3, 4].map(i => (
                <rect key={i} x={i * 3 + 0.5} y={9 - i * 2} width="3" height={4 + i * 2} fill="#fff" stroke="#303c48" strokeWidth=".8" />
              ))}
            </svg>
            <svg width="16" height="8" viewBox="0 0 16 8"><path d="M8 1l4.500 5h-9z" fill="#fff" stroke="#4c5c70" strokeWidth=".6" /></svg>
            <Lang>EN</Lang>
          </Tray>
          <TaskGrip />
          <TaskButtons>
            <Stack />
            <TaskButton $w={52} aria-label="explorer">
              <svg width="34" height="32" viewBox="0 0 34 32">
                <path d="M2 5l1-3h8l1 3h3l1-2h7l1 2h7l1 2v21H2z" fill="#f2d888" stroke="#c8a048" />
                <path d="M4 3.500h4" stroke="#38a038" strokeWidth="2" />
                <path d="M13 5.500h4" stroke="#c84820" strokeWidth="2" />
                <path d="M23 7.500h4" stroke="#3080c8" strokeWidth="2" />
                <path d="M2 10h30l-1 18H3z" fill="#fbedb0" stroke="#d8b860" />
                <path d="M6 31V21c0-2 1-3 3-3h16c2 0 3 1 3 3v10h-5v-6H11v6z" fill="#8cc8e8" fillOpacity=".9" stroke="#5098c0" />
              </svg>
            </TaskButton>
            <TaskButton $on><FbsMark $big>FBS</FbsMark></TaskButton>
            <TaskButton aria-label="broker">
              <svg width="32" height="32" viewBox="0 0 32 32">
                <rect width="32" height="32" fill="#cc1414" />
                <path d="M16 2L28 8.500V15l-5-2.500v-1L16 8l-7 4v7l-5 3V8.500z" fill="#fff" />
                <path d="M16 30L4 23.500V17l5 2.500v1L16 24l7-4v-7l5-3v13.500z" fill="#fff" />
                <path d="M16 10l5.500 3v6L16 22l-5.500-3v-6z" fill="#b80c0c" />
              </svg>
            </TaskButton>
            <TaskButton $dim aria-label="browser">
              <svg width="30" height="30" viewBox="0 0 30 30">
                <circle cx="15" cy="15" r="15" fill="#fbc72c" />
                <path d="M2 7.500A15 15 0 0128 7.500H15L8.500 19z" fill="#de4a3c" />
                <path d="M2 7.500A15 15 0 0015 30l6.500-11.200L15 22.500 8.500 18.700z" fill="#2ca050" />
                <circle cx="15" cy="15" r="7.500" fill="#fff" />
                <circle cx="15" cy="15" r="5.800" fill="#4482f0" />
              </svg>
            </TaskButton>
          </TaskButtons>
          <TaskEnd>
            <TaskGrip />
            <button aria-label="start">
              <svg width="38" height="38" viewBox="0 0 38 38">
                <defs>
                  <radialGradient id="orb" cx=".5" cy=".9" r=".9">
                    <stop offset="0" stopColor="#48d0f4" />
                    <stop offset=".5" stopColor="#1c6ca8" />
                    <stop offset="1" stopColor="#506880" />
                  </radialGradient>
                </defs>
                <circle cx="19" cy="19" r="17.500" fill="url(#orb)" stroke="#24405c" />
                <path d="M5 14a15 13 0 0128 0c-8 5-20 5-28 0z" fill="#fff" fillOpacity=".3" />
                <path d="M10 11c3-2 5-2 8-.5l-1.500 7.500c-3-1.500-5-1.500-8 .5z" fill="#f0642c" />
                <path d="M19.500 11c3 1.500 6 1.500 9-.5L27 18c-3 2-6 2-9 .5z" fill="#8cc83c" />
                <path d="M8 20.500c3-2 5-2 8-.5l-1.500 7c-3-1.500-5-1.500-8 .5z" fill="#48a8f0" />
                <path d="M17.500 20.500c3 1.500 6 1.500 9-.5L25 27c-3 2-6 2-9 .5z" fill="#fcd03c" />
              </svg>
            </button>
          </TaskEnd>
        </TaskBar>
      </Window>
    </>
  )
}

export default App
